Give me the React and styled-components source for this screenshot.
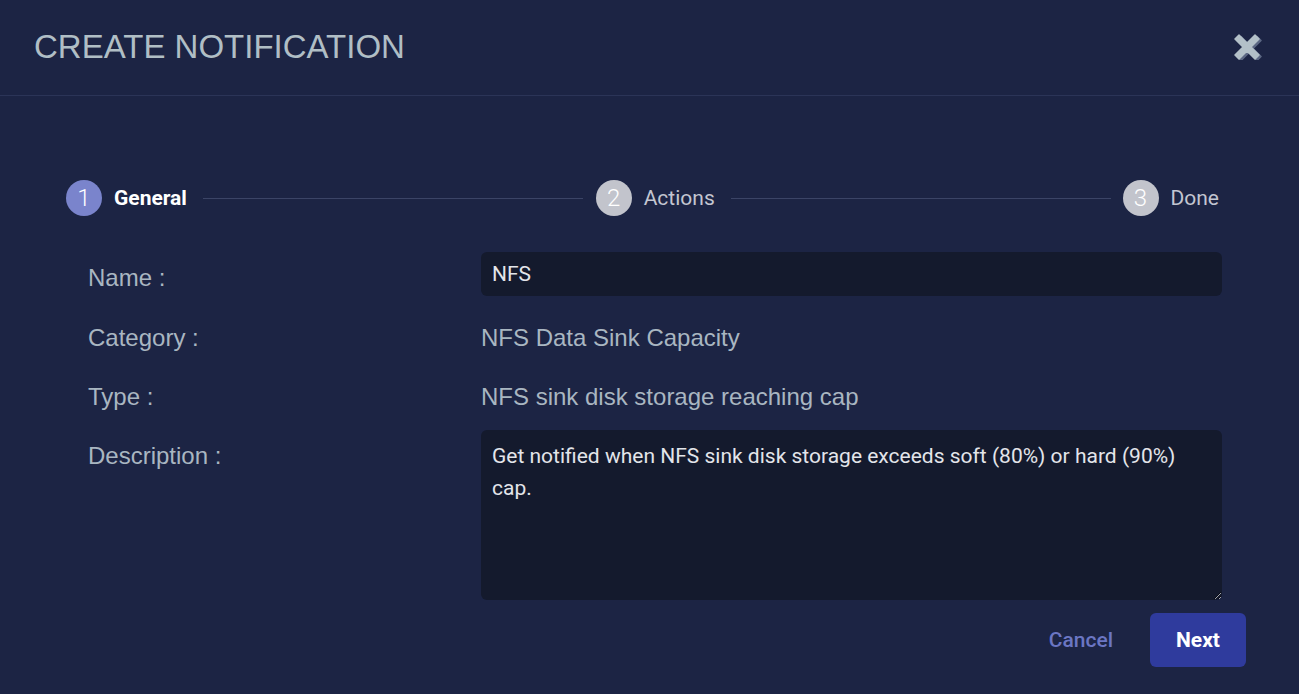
import React from "react";
import styled, { createGlobalStyle } from "styled-components";

const Global = createGlobalStyle`
  html, body { margin: 0; padding: 0; background: #1c2444; }
  body { font-family: "Liberation Sans", Arial, sans-serif; }
  * { box-sizing: border-box; }
`;

const Modal = styled.div`
  width: 1299px;
  height: 694px;
  background: #1c2444;
  display: flex;
  flex-direction: column;
`;

const Header = styled.header`
  height: 96px;
  padding: 0 37px 0 34px;
  display: flex;
  align-items: center;
  justify-content: space-between;
  border-bottom: 1px solid #2b3457;
`;

const Title = styled.h1`
  margin: 0;
  padding-bottom: 2px;
  font-family: "Liberation Sans", Arial, sans-serif;
  font-weight: 400;
  font-size: 33px;
  color: #b0bec5;
  letter-spacing: 0;
`;

const CloseButton = styled.button`
  border: 0;
  background: none;
  padding: 0;
  margin-top: -4px;
  width: 28px;
  height: 28px;
  display: flex;
  cursor: pointer;
`;

const Body = styled.div`
  flex: 1;
  padding: 84px 0 0 0;
  display: flex;
  flex-direction: column;
`;

const Stepper = styled.div`
  display: flex;
  align-items: center;
  padding: 0 80px 0 66px;
  height: 36px;
  font-family: Roboto, "Noto Sans", sans-serif;
`;

const Step = styled.div`
  display: flex;
  align-items: center;
  gap: 12px;
`;

const Circle = styled.div`
  width: 36px;
  height: 36px;
  border-radius: 50%;
  background: ${(p) => (p.$active ? "#7a84cc" : "#c2c4cc")};
  color: #ffffff;
  font-weight: 300;
  font-size: 24px;
  display: flex;
  align-items: center;
  justify-content: center;
`;

const StepLabel = styled.span`
  font-size: 21px;
  font-weight: ${(p) => (p.$active ? 700 : 400)};
  color: ${(p) => (p.$active ? "#ffffff" : "#c3c6d1")};
`;

const Line = styled.div`
  flex: 1;
  height: 1px;
  background: #3b4466;
  margin: 0 ${(p) => p.$right}px 0 ${(p) => p.$left}px;
`;

const Form = styled.div`
  margin-top: 36px;
  padding-left: 88px;
  display: flex;
  flex-direction: column;
`;

const Row = styled.div`
  display: grid;
  grid-template-columns: 393px 741px;
  align-items: start;
  margin-top: ${(p) => p.$gap || 0}px;
`;

const Label = styled.div`
  font-family: "Liberation Sans", Arial, sans-serif;
  font-size: 24px;
  line-height: 28px;
  color: #a9b6c1;
  padding-top: ${(p) => p.$pad || 0}px;
`;

const Value = styled.div`
  font-family: "Liberation Sans", Arial, sans-serif;
  font-size: 24px;
  line-height: 28px;
  color: #a9b6c1;
`;

const TextInput = styled.input`
  width: 100%;
  height: 44px;
  border: 0;
  outline: none;
  border-radius: 6px;
  background: #141a2d;
  color: #e3e5ea;
  font-family: Roboto, "Noto Sans", sans-serif;
  font-size: 21px;
  padding: 0 11px;
`;

const TextArea = styled.textarea`
  width: 100%;
  height: 170px;
  border: 0;
  outline: none;
  border-radius: 6px;
  background: #141a2d;
  color: #e3e5ea;
  font-family: Roboto, "Noto Sans", sans-serif;
  font-size: 21px;
  line-height: 32px;
  padding: 10px 11px;
  resize: both;
  color-scheme: dark;
  display: block;
`;

const Footer = styled.div`
  margin-top: 13px;
  padding-right: 53px;
  display: flex;
  justify-content: flex-end;
  align-items: center;
  gap: 21px;
  font-family: Roboto, "Noto Sans", sans-serif;
`;

const Button = styled.button`
  border: 0;
  height: 54px;
  border-radius: 6px;
  font-family: Roboto, "Noto Sans", sans-serif;
  font-size: 21px;
  font-weight: ${(p) => (p.$primary ? 700 : 500)};
  padding: 0 ${(p) => (p.$primary ? 26 : 16)}px;
  min-width: ${(p) => (p.$primary ? "96px" : "auto")};
  background: ${(p) => (p.$primary ? "#2f3b9d" : "transparent")};
  color: ${(p) => (p.$primary ? "#ffffff" : "#6b76c3")};
  cursor: pointer;
`;

function CloseIcon() {
  const d =
    "M5 3 L13 11 L21 3 L25 7 L17 15 L25 23 L21 27 L13 19 L5 27 L1 23 L9 15 L1 7 Z";
  return (
    <svg width="28" height="28" viewBox="0 0 28 28">
      <path d={d} fill="#5d6884" transform="translate(2,1.5)" strokeLinejoin="round" stroke="#5d6884" strokeWidth="1.5" />
      <path d={d} fill="#b3c0c8" strokeLinejoin="round" stroke="#b3c0c8" strokeWidth="1.5" />
    </svg>
  );
}

export default function App() {
  return (
    <>
      <Global />
      <Modal>
        <Header>
          <Title>CREATE NOTIFICATION</Title>
          <CloseButton aria-label="Close">
            <CloseIcon />
          </CloseButton>
        </Header>
        <Body>
          <Stepper>
            <Step>
              <Circle $active>1</Circle>
              <StepLabel $active>General</StepLabel>
            </Step>
            <Line $left={16} $right={13} />
            <Step>
              <Circle>2</Circle>
              <StepLabel>Actions</StepLabel>
            </Step>
            <Line $left={16} $right={12} />
            <Step>
              <Circle>3</Circle>
              <StepLabel>Done</StepLabel>
            </Step>
          </Stepper>
          <Form>
            <Row>
              <Label $pad={12}>Name :</Label>
              <TextInput defaultValue="NFS" />
            </Row>
            <Row $gap={28}>
              <Label>Category :</Label>
              <Value>NFS Data Sink Capacity</Value>
            </Row>
            <Row $gap={31}>
              <Label>Type :</Label>
              <Value>NFS sink disk storage reaching cap</Value>
            </Row>
            <Row $gap={19}>
              <Label $pad={12}>Description :</Label>
              <TextArea defaultValue="Get notified when NFS sink disk storage exceeds soft (80%) or hard (90%) cap." />
            </Row>
          </Form>
          <Footer>
            <Button>Cancel</Button>
            <Button $primary>Next</Button>
          </Footer>
        </Body>
      </Modal>
    </>
  );
}
